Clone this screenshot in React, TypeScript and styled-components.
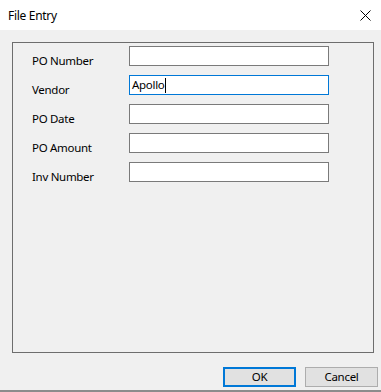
import styled, { createGlobalStyle } from 'styled-components';

const GlobalStyle = createGlobalStyle`
  html, body {
    margin: 0;
    padding: 0;
    background: #f0f0f0;
  }
  body {
    font-family: 'Noto Sans', 'Open Sans', sans-serif;
    font-size: 11.5px;
    letter-spacing: -0.3px;
    color: #000;
  }
`;

const Window = styled.div`
  width: 381px;
  height: 392px;
  display: flex;
  flex-direction: column;
  background: #f0f0f0;
  overflow: hidden;
`;

const TitleBar = styled.div`
  height: 30px;
  flex: none;
  background: #fff;
  display: flex;
  align-items: center;
  justify-content: space-between;
  padding: 0 10px 0 8px;
`;

const Title = styled.span`
  font-size: 12px;
  line-height: 16px;
  margin-top: 1px;
`;

const CloseButton = styled.button`
  border: none;
  background: none;
  padding: 0;
  width: 12px;
  height: 12px;
  display: flex;
  align-items: center;
  justify-content: center;
`;

const Body = styled.div`
  flex: 1;
  display: flex;
  flex-direction: column;
  padding: 12px 0 0 12px;
  border-bottom: 2px solid #8c8c8c;
`;

const Panel = styled.div`
  width: 362px;
  height: 311px;
  box-sizing: border-box;
  border: 1px solid #6d6d6d;
  padding: 3px 0 0 19px;
  display: flex;
  flex-direction: column;
  gap: 9px;
`;

const Row = styled.div`
  display: flex;
  height: 20px;
`;

const Label = styled.label`
  width: 97px;
  flex: none;
  padding-top: 8px;
  line-height: 14px;
  white-space: nowrap;
`;

const TextBox = styled.div<{ $focused?: boolean }>`
  width: 200px;
  height: 20px;
  box-sizing: border-box;
  background: #fff;
  border: 1px solid ${p => (p.$focused ? '#0078d7' : '#7a7a7a')};
  padding: 0 0 0 2px;
  display: flex;
  align-items: center;
  line-height: 14px;
`;

const Caret = styled.span`
  display: inline-block;
  width: 1px;
  height: 15px;
  background: #000;
  margin-left: 1px;
`;

const ButtonRow = styled.div`
  display: flex;
  justify-content: flex-end;
  gap: 9px;
  padding-right: 3px;
  margin-top: 14px;
`;

const Button = styled.button<{ $primary?: boolean }>`
  width: 73px;
  height: 20px;
  box-sizing: border-box;
  background: #e1e1e1;
  border: ${p => (p.$primary ? '2px solid #0078d7' : '1px solid #adadad')};
  font-family: inherit;
  font-size: 11.5px;
  letter-spacing: -0.3px;
  color: #000;
  padding: 0;
  line-height: 14px;
`;

const fields = [
  { label: 'PO Number', value: '' },
  { label: 'Vendor', value: 'Apollo', focused: true },
  { label: 'PO Date', value: '' },
  { label: 'PO Amount', value: '' },
  { label: 'Inv Number', value: '' },
];

export default function App() {
  return (
    <Window>
      <GlobalStyle />
      <TitleBar>
        <Title>File Entry</Title>
        <CloseButton aria-label="Close">
          <svg width="11" height="11" viewBox="0 0 11 11">
            <path d="M0.5 0.5 L10.5 10.5 M10.5 0.5 L0.5 10.5" stroke="#000" strokeWidth="1" />
          </svg>
        </CloseButton>
      </TitleBar>
      <Body>
        <Panel>
          {fields.map(f => (
            <Row key={f.label}>
              <Label>{f.label}</Label>
              <TextBox $focused={f.focused}>
                {f.value}
                {f.focused && <Caret />}
              </TextBox>
            </Row>
          ))}
        </Panel>
        <ButtonRow>
          <Button $primary>OK</Button>
          <Button>Cancel</Button>
        </ButtonRow>
      </Body>
    </Window>
  );
}
